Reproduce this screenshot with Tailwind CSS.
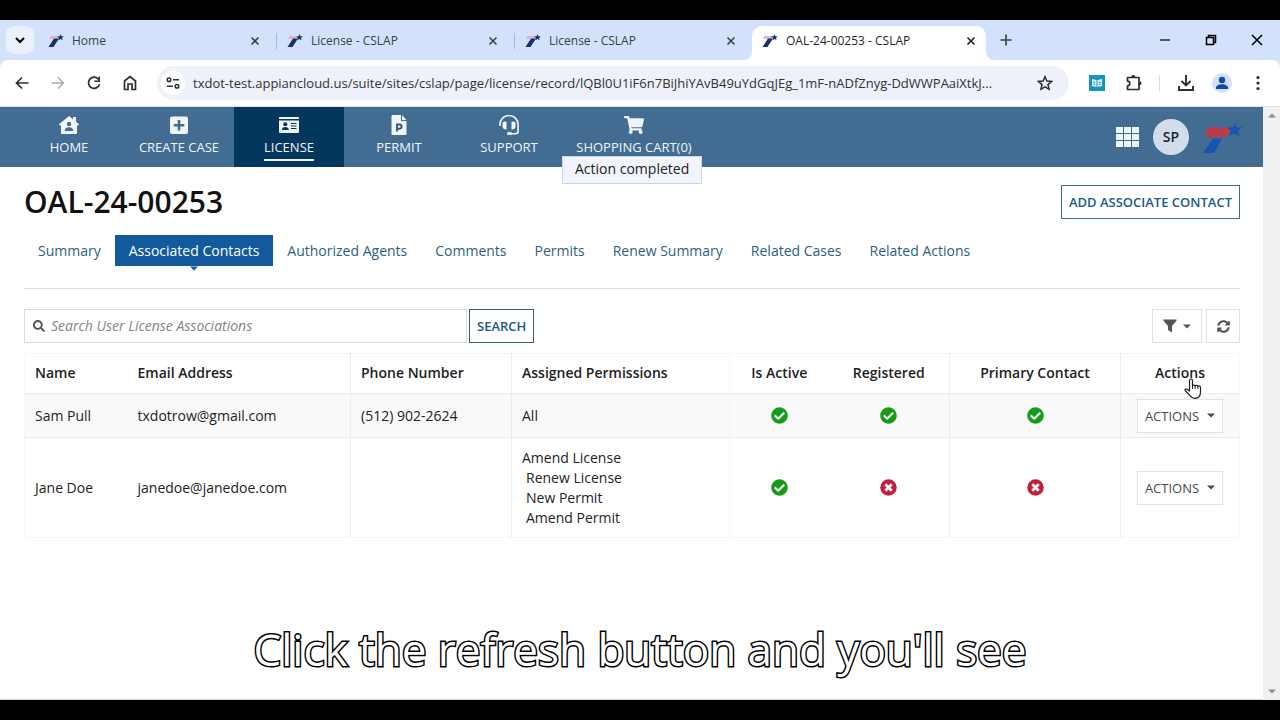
<!DOCTYPE html>
<html lang="en" class="h-full">
  <head>
    <meta charset="UTF-8" />
    <meta name="viewport" content="width=device-width, initial-scale=1.0" />
    <title>OAL-24-00253 - CSLAP</title>
    <script src="https://cdn.jsdelivr.net/npm/@tailwindcss/browser@4"></script>
  </head>
  <body class="relative flex h-screen flex-col overflow-hidden bg-black py-5 font-['Open_Sans','Noto_Sans',sans-serif] text-sm text-[#222]">
    <!-- Shared icons -->
    <svg class="hidden">
      <symbol id="favicon" viewBox="0 0 16 16">
        <path fill="#e3b3c4" d="M2.500 3h8L9.500 6H1z" />
        <path fill="#17306f" d="M6 5.500h5L5.500 14H0.500z" />
        <path fill="#17306f" d="M12.500 1l.9 2.200 2.400.2-1.800 1.500.6 2.400-2.100-1.300L10.300 7.300l.7-2.400-1.900-1.500 2.500-.1z" />
      </symbol>
      <symbol id="close" viewBox="0 0 10 10">
        <path fill="none" stroke="currentColor" stroke-width="1.600" d="M1.500 1.500l7 7M8.500 1.500l-7 7" />
      </symbol>
      <symbol id="check" viewBox="0 0 512 512">
        <path fill="currentColor" d="M504 256c0 136.967-111.033 248-248 248S8 392.967 8 256 119.033 8 256 8s248 111.033 248 248zM227.314 387.314l184-184c6.248-6.248 6.248-16.379 0-22.627l-22.627-22.627c-6.248-6.249-16.379-6.249-22.628 0L216 308.118l-70.059-70.059c-6.248-6.248-16.379-6.248-22.628 0l-22.627 22.627c-6.248 6.248-6.248 16.379 0 22.627l104 104c6.249 6.249 16.379 6.249 22.628.001z" />
      </symbol>
      <symbol id="times" viewBox="0 0 16 16">
        <circle cx="8" cy="8" r="7.750" fill="currentColor" />
        <path stroke="#fff" stroke-width="2.600" d="M5 5l6 6M11 5l-6 6" />
      </symbol>
      <symbol id="caret" viewBox="0 0 8 5">
        <path fill="currentColor" d="M0 0.500h8l-4 4z" />
      </symbol>
    </svg>

    <!-- Tab strip -->
    <header class="flex h-10 shrink-0 items-end bg-[#d3e2fb] pl-1.5 text-xs text-[#3c4043]">
      <button class="mb-1.5 flex size-7 items-center justify-center rounded-lg bg-[#eaf1fd]" aria-label="Search tabs">
        <svg class="h-2 w-2.5 text-black" viewBox="0 0 10 8"><path fill="none" stroke="currentColor" stroke-width="2" d="M1 2l4 4 4-4" /></svg>
      </button>
      <div class="ml-1 mr-0.5 flex h-[34px] w-[236px] items-center px-2.5 pb-1">
        <svg class="size-4"><use href="#favicon" /></svg>
        <a href="#" class="ml-2 grow">Home</a>
        <button class="mr-1" aria-label="Close tab"><svg class="size-2.5"><use href="#close" /></svg></button>
      </div>
      <div class="mr-0.5 flex h-[34px] w-[236px] items-center px-2.5 pb-1">
        <span class="-ml-2.5 mr-2.5 h-4 w-px bg-[#a3b8e0]"></span>
        <svg class="size-4"><use href="#favicon" /></svg>
        <a href="#" class="ml-2 grow">License - CSLAP</a>
        <button class="mr-1" aria-label="Close tab"><svg class="size-2.5"><use href="#close" /></svg></button>
      </div>
      <div class="mr-0.5 flex h-[34px] w-[236px] items-center px-2.5 pb-1">
        <span class="-ml-2.5 mr-2.5 h-4 w-px bg-[#a3b8e0]"></span>
        <svg class="size-4"><use href="#favicon" /></svg>
        <a href="#" class="ml-2 grow">License - CSLAP</a>
        <button class="mr-1" aria-label="Close tab"><svg class="size-2.5"><use href="#close" /></svg></button>
      </div>
      <div class="relative flex h-[34px] w-[234px] items-center rounded-t-[10px] bg-white px-2.5 pb-1 text-[#1f1f1f]">
        <svg class="absolute bottom-0 right-full size-2 text-white" viewBox="0 0 8 8"><path fill="currentColor" d="M8 0v8H0a8 8 0 0 0 8-8z" /></svg>
        <svg class="absolute bottom-0 left-full size-2 text-white" viewBox="0 0 8 8"><path fill="currentColor" d="M0 0v8h8a8 8 0 0 1-8-8z" /></svg>
        <svg class="size-4"><use href="#favicon" /></svg>
        <a href="#" class="ml-2 grow">OAL-24-00253 - CSLAP</a>
        <button aria-label="Close tab"><svg class="size-2.5"><use href="#close" /></svg></button>
      </div>
      <button class="mb-3.5 ml-3.5" aria-label="New tab">
        <svg class="size-3" viewBox="0 0 12 12"><path stroke="currentColor" stroke-width="1.600" d="M6 0.500v11M0.500 6h11" /></svg>
      </button>
      <div class="mb-3.5 ml-auto mr-[17px] flex items-center gap-[34px] text-black">
        <button aria-label="Minimize"><svg class="size-3" viewBox="0 0 12 12"><path stroke="currentColor" stroke-width="1.200" d="M1 6h10" /></svg></button>
        <button aria-label="Restore"><svg class="size-3" viewBox="0 0 12 12"><path fill="none" stroke="currentColor" stroke-width="1.500" d="M1.500 3.500h7v7h-7zM3.500 3.500V1.500h7v7h-2" /></svg></button>
        <button aria-label="Close window"><svg class="size-3" viewBox="0 0 12 12"><path stroke="currentColor" stroke-width="1.500" d="M1 1l10 10M11 1L1 11" /></svg></button>
      </div>
    </header>

    <!-- Toolbar -->
    <div class="shrink-0 bg-[#d3e2fb]">
      <div class="flex h-[47px] items-center rounded-t-lg border-b border-[#dfe3ea] bg-white pl-[15px] pr-5 text-[#2b2d30]">
        <button aria-label="Back"><svg class="size-3.5" viewBox="0 0 14 14"><path fill="none" stroke="currentColor" stroke-width="1.700" d="M13.500 7H1.500M7 1.500L1.500 7 7 12.500" /></svg></button>
        <button class="ml-[22px] text-[#a9abae]" aria-label="Forward"><svg class="size-3.5" viewBox="0 0 14 14"><path fill="none" stroke="currentColor" stroke-width="1.500" d="M0.500 7h12M7 1.500L12.500 7 7 12.500" /></svg></button>
        <button class="ml-[22px]" aria-label="Reload"><svg class="size-3.5" viewBox="0 0 14 14"><path fill="none" stroke="currentColor" stroke-width="1.700" d="M11.600 3.400A5.600 5.600 0 1 0 12.500 8.200" /><path fill="currentColor" d="M13 0.500v5.600H7.400V4.500h4V0.500z" /></svg></button>
        <button class="ml-[22px]" aria-label="Home page"><svg class="h-4 w-3.5" viewBox="0 0 14 16"><path fill="none" stroke="currentColor" stroke-width="1.700" d="M1.500 6L7 1.500 12.500 6v8.500H9V9H5v5.500H1.500z" /></svg></button>
        <div class="ml-5 flex h-[34px] min-w-0 grow items-center rounded-full bg-[#eef1fa] pl-1 pr-4">
          <button class="flex size-6 shrink-0 items-center justify-center rounded-full bg-white" aria-label="Site information">
            <svg class="h-3 w-3.5" viewBox="0 0 14 12"><g fill="none" stroke="currentColor" stroke-width="1.500"><circle cx="3" cy="2.700" r="1.800" /><path d="M7 2.700h6M1 9.300h6" /><circle cx="11" cy="9.300" r="1.800" /></g></svg>
          </button>
          <input aria-label="Address" class="ml-2 min-w-0 grow bg-transparent text-[13px] text-[#303236] outline-none" value="txdot-test.appiancloud.us/suite/sites/cslap/page/license/record/lQBl0U1iF6n7BiJhiYAvB49uYdGqJEg_1mF-nADfZnyg-DdWWPAaiXtkJ..." />
          <button class="ml-4" aria-label="Bookmark this tab"><svg class="size-4" viewBox="0 0 16 16"><path fill="none" stroke="currentColor" stroke-width="1.500" d="M8 1.700l1.900 4.400 4.700.4-3.600 3.100 1.100 4.700L8 11.800l-4.100 2.500L5 9.600 1.400 6.500l4.700-.4z" /></svg></button>
        </div>
        <button class="ml-5" aria-label="Reader"><svg class="size-4" viewBox="0 0 16 16"><path fill="#1a93bd" d="M0 0h16v16H0z" /><path fill="#dff1f8" d="M3 4l4.500 1v7L3 11zM13 4L8.500 5v7l4.500-1z" /><path stroke="#1a93bd" d="M4.200 7l2 .4M4.200 9l2 .4M9.800 7.400l2-.4M9.800 9.400l2-.4" /></svg></button>
        <button class="ml-5" aria-label="Extensions"><svg class="size-[18px]" viewBox="0 0 18 18"><path fill="none" stroke="currentColor" stroke-width="1.700" stroke-linejoin="round" d="M2.500 3.500h11.500v12H2.500v-3.700a2.300 2.300 0 0 0 0-4.600z" /><path fill="currentColor" d="M6.300 3a2 2 0 0 1 4 0zM14.500 7.300a2 2 0 0 1 0 4z" /></svg></button>
        <span class="ml-4 h-4 w-px bg-[#cfdcf2]"></span>
        <button class="ml-[18px]" aria-label="Downloads"><svg class="size-4" viewBox="0 0 16 16"><path fill="none" stroke="currentColor" stroke-width="1.900" d="M8 0v10M3.500 6L8 10.500 12.500 6M1 11v4h14v-4" /></svg></button>
        <button class="ml-[18px]" aria-label="Profile"><svg class="size-5" viewBox="0 0 20 20"><circle cx="10" cy="10" r="10" fill="#d3e2fb" /><circle cx="10" cy="7" r="3.200" fill="#1348b8" /><path fill="#1348b8" d="M4 16v-1.500c0-2 3-3.300 6-3.300s6 1.300 6 3.300V16z" /></svg></button>
        <button class="ml-6" aria-label="Menu"><svg class="h-4 w-1" viewBox="0 0 4 16"><g fill="currentColor"><circle cx="2" cy="2.500" r="1.600" /><circle cx="2" cy="8" r="1.600" /><circle cx="2" cy="13.500" r="1.600" /></g></svg></button>
      </div>
    </div>

    <div class="flex min-h-0 grow bg-white">
      <div class="min-w-0 grow border-b border-[#d5d5d5]">
        <!-- Site navigation -->
        <nav class="flex h-[60px] items-center bg-[#436c92] pl-3.5 pr-5 text-[13px] leading-5 text-[#f0f5fa]">
          <a href="#" class="flex h-full w-[110px] flex-col items-center pt-2">
            <svg class="size-5" viewBox="0 0 20 20"><path fill="currentColor" d="M10 1l4 3.200V2h3v4.700l3 2.500-1 1.500-1-.6V18a1 1 0 0 1-1 1H3a1 1 0 0 1-1-1v-7.900l-1 .6-1-1.500z" /><circle cx="10" cy="9" r="2.200" fill="#436c92" /><path fill="#436c92" d="M5.800 16c0-2.500 1.500-3.700 4.200-3.700s4.200 1.200 4.200 3.700z" /></svg>
            <span class="mt-0.5">HOME</span>
          </a>
          <a href="#" class="flex h-full w-[110px] flex-col items-center pt-2">
            <svg class="size-5" viewBox="0 0 20 20"><rect x="1" y="1.500" width="18" height="17.500" rx="2" fill="currentColor" /><path stroke="#436c92" stroke-width="2.600" d="M10 5v10.500M4.700 10.200h10.600" /></svg>
            <span class="mt-0.5">CREATE CASE</span>
          </a>
          <a href="#" class="flex h-full w-[110px] flex-col items-center bg-[#03375e] pt-2">
            <svg class="size-5" viewBox="0 0 20 20"><path fill="currentColor" d="M1 2h18a1 1 0 0 1 1 1v1H0V3a1 1 0 0 1 1-1zM0 5.500h20V17a1 1 0 0 1-1 1H1a1 1 0 0 1-1-1z" /><circle cx="6.300" cy="9.300" r="2" fill="#03375e" /><path fill="#03375e" d="M2.800 15c0-2 1.400-3 3.500-3s3.500 1 3.500 3z" /><path stroke="#03375e" stroke-width="1.100" d="M12 8.500h5.500M12 11h5.500M12 13.500h5.500" /></svg>
            <span class="mt-0.5 border-b-2 pb-0.5">LICENSE</span>
          </a>
          <a href="#" class="flex h-full w-[110px] flex-col items-center pt-2">
            <svg class="size-5" viewBox="0 0 20 20"><path fill="currentColor" d="M3 0h9v6h5.500v13a1 1 0 0 1-1 1H3.500a1 1 0 0 1-1-1V1zM13 0l4.500 5H13z" /><path fill="none" stroke="#35587a" stroke-width="1.900" d="M8 16.500V9.500h2.500a2.100 2.100 0 0 1 0 4.200H8" /></svg>
            <span class="mt-0.5">PERMIT</span>
          </a>
          <a href="#" class="flex h-full w-[110px] flex-col items-center pt-2">
            <svg class="size-5" viewBox="0 0 20 20"><path fill="none" stroke="currentColor" stroke-width="1.600" d="M0.900 11V9.500a9.100 9 0 0 1 18.200 0V16a2.700 2.700 0 0 1-2.700 2.700H11" /><path fill="currentColor" d="M3.500 9.500A2.500 2.500 0 0 1 7.500 7v7.500c-2.500 0-4-1-4-3zM12.500 7a2.500 2.500 0 0 1 4 2.500v2c0 2-1.500 3-4 3z" /><rect x="8" y="17" width="5" height="3" rx="1.500" fill="currentColor" /></svg>
            <span class="mt-0.5">SUPPORT</span>
          </a>
          <a href="#" class="flex h-full w-[140px] flex-col items-center pt-2">
            <svg class="size-5" viewBox="0 0 576 512"><path fill="currentColor" d="M528.12 301.319l47.273-208C578.806 78.301 567.391 64 551.99 64H159.208l-9.166-44.81C147.758 8.021 137.93 0 126.529 0H24C10.745 0 0 10.745 0 24v16c0 13.255 10.745 24 24 24h69.883l70.248 343.435C147.325 417.1 136 435.222 136 456c0 30.928 25.072 56 56 56s56-25.072 56-56c0-15.674-6.447-29.835-16.824-40h209.647C430.447 426.165 424 440.326 424 456c0 30.928 25.072 56 56 56s56-25.072 56-56c0-22.172-12.888-41.332-31.579-50.405l5.517-24.276c3.413-15.018-8.002-29.319-23.403-29.319H218.117l-6.545-32h293.145c11.206 0 20.92-7.754 23.403-18.681z" /></svg>
            <span class="mt-0.5">SHOPPING CART(0)</span>
          </a>
          <button class="ml-auto" aria-label="Sites"><svg class="h-5 w-[23px]" viewBox="0 0 23 20"><path fill="currentColor" d="M0 0h7v6H0zM8 0h7v6H8zM16 0h7v6h-7zM0 7h7v6H0zM8 7h7v6H8zM16 7h7v6h-7zM0 14h7v6H0zM8 14h7v6H8zM16 14h7v6h-7z" /></svg></button>
          <button class="ml-3.5 size-9 rounded-full bg-[#d3dcea] text-sm font-semibold text-[#222]">SP</button>
          <svg class="ml-3 h-[34px] w-[42px]" viewBox="0 0 42 34" role="img" aria-label="TxDOT">
            <path fill="#c8373f" d="M7 7.500h20c2 0 3 2 1.500 4L25 17H4z" />
            <path stroke="#8f5063" stroke-width="0.700" d="M6 10h22M5 12.500h22M4 15h22" />
            <path fill="#1456b0" d="M12 18.500h9L13 33H2z" />
            <path fill="#1456b0" d="M34 1.500l1.800 6 6-.6-5 4 2 5.600-5.300-3-6 2.500 2.500-5-3.500-3.500 6.200-.3z" />
          </svg>
        </nav>

        <main class="pl-6 pr-[23px] pt-4">
          <div class="flex items-center justify-between">
            <h1 class="text-[30px] leading-[38px] font-semibold text-[#111]">OAL-24-00253</h1>
            <button class="h-[34px] border border-[#3c6f84] px-[7px] text-[13px] font-semibold text-[#20588a]">ADD ASSOCIATE CONTACT</button>
          </div>

          <div class="mt-3.5 flex border-b border-[#d9d9d9] pb-[22px] leading-[19px] text-[#2a5f83]">
            <a href="#" class="px-3.5 py-1.5">Summary</a>
            <a href="#" class="relative bg-[#125a9c] px-3.5 py-1.5 text-white">Associated Contacts
              <svg class="absolute left-1/2 top-full h-[5px] w-2 -translate-x-1/2 text-[#125a9c]"><use href="#caret" /></svg>
            </a>
            <a href="#" class="px-3.5 py-1.5">Authorized Agents</a>
            <a href="#" class="px-3.5 py-1.5">Comments</a>
            <a href="#" class="px-3.5 py-1.5">Permits</a>
            <a href="#" class="px-3.5 py-1.5">Renew Summary</a>
            <a href="#" class="px-3.5 py-1.5">Related Cases</a>
            <a href="#" class="px-3.5 py-1.5">Related Actions</a>
          </div>

          <div class="mt-5 flex items-center">
            <label class="flex h-[34px] w-[443px] items-center border border-[#d9dcde] px-2 text-[#555]">
              <svg class="size-3 shrink-0" viewBox="0 0 512 512"><path fill="currentColor" d="M505 442.700L405.300 343c-4.500-4.500-10.600-7-17-7H372c27.600-35.300 44-79.700 44-128C416 93.100 322.900 0 208 0S0 93.100 0 208s93.100 208 208 208c48.300 0 92.700-16.400 128-44v16.300c0 6.400 2.500 12.500 7 17l99.700 99.700c9.400 9.400 24.600 9.400 33.900 0l28.300-28.300c9.400-9.400 9.400-24.600.1-34zM208 336c-70.700 0-128-57.200-128-128 0-70.700 57.200-128 128-128 70.700 0 128 57.200 128 128 0 70.700-57.200 128-128 128z" /></svg>
              <input type="text" aria-label="Search User License Associations" placeholder="Search User License Associations" class="ml-1.5 grow outline-none placeholder:text-[#858585] placeholder:italic" />
            </label>
            <button class="ml-0.5 h-[34px] border border-[#3a5f70] px-[7px] text-[13px] font-semibold text-[#20588a]">SEARCH</button>
            <button class="ml-auto flex h-[34px] w-[50px] items-center justify-center gap-1.5 border border-[#e2e2e2] text-[#555]" aria-label="Filter">
              <svg class="size-3.5" viewBox="0 0 14 14"><path fill="currentColor" d="M0.500 0.500h13v1.300L9 7v6.500l-4-2.500V7L0.500 1.800z" /></svg>
              <svg class="h-[5px] w-2"><use href="#caret" /></svg>
            </button>
            <button class="ml-1 flex size-[34px] items-center justify-center border border-[#e2e2e2] text-[#555]" aria-label="Refresh">
              <svg class="size-[13px]" viewBox="0 0 512 512"><path fill="currentColor" d="M370.720 133.280C339.458 104.008 298.888 87.962 255.848 88c-77.458.068-144.328 53.178-162.791 126.850-1.344 5.363-6.122 9.150-11.651 9.150H24.103c-7.498 0-13.194-6.807-11.807-14.176C33.933 94.924 134.813 8 256 8c66.448 0 126.791 26.136 171.315 68.685L463.030 40.970C478.149 25.851 504 36.559 504 57.941V192c0 13.255-10.745 24-24 24H345.941c-21.382 0-32.090-25.851-16.971-40.971l41.750-41.749zM32 296h134.059c21.382 0 32.090 25.851 16.971 40.971l-41.750 41.750c31.262 29.273 71.835 45.319 114.876 45.280 77.418-.070 144.315-53.144 162.787-126.849 1.344-5.363 6.122-9.150 11.651-9.150h57.304c7.498 0 13.194 6.807 11.807 14.176C478.067 417.076 377.187 504 256 504c-66.448 0-126.791-26.136-171.315-68.685L48.970 471.030C33.851 486.149 8 475.441 8 454.059V320c0-13.255 10.745-24 24-24z" /></svg>
            </button>
          </div>

          <table class="mt-2.5 w-full table-fixed border border-[#f6f6f6] leading-5">
            <thead>
              <tr class="h-10 border-b border-[#ebebeb] text-left [&>th]:px-2.5 [&>th]:pb-0.5 [&>th]:font-semibold">
                <th class="w-[103px]">Name</th>
                <th>Email Address</th>
                <th class="w-[161px] border-x border-[#ececec]">Phone Number</th>
                <th class="w-[218px]">Assigned Permissions</th>
                <th class="w-[99px] border-l border-[#f6f6f6] text-center">Is Active</th>
                <th class="w-[121px] text-center">Registered</th>
                <th class="w-[171px] border-x border-[#ececec] text-center">Primary Contact</th>
                <th class="w-[119px] text-center">Actions</th>
              </tr>
            </thead>
            <tbody class="[&_td]:px-2.5">
              <tr class="h-11 border-b border-[#ebebeb] bg-[#f9f9f9]">
                <td>Sam Pull</td>
                <td>txdotrow@gmail.com</td>
                <td class="border-x border-[#ececec]">(512) 902-2624</td>
                <td>All</td>
                <td class="border-l border-[#f3f3f3]"><svg class="mx-auto size-[17px] text-[#179b17]" role="img" aria-label="Yes"><use href="#check" /></svg></td>
                <td><svg class="mx-auto size-[17px] text-[#179b17]" role="img" aria-label="Yes"><use href="#check" /></svg></td>
                <td class="border-x border-[#ececec]"><svg class="mx-auto size-[17px] text-[#179b17]" role="img" aria-label="Yes"><use href="#check" /></svg></td>
                <td><button class="mx-auto flex h-[34px] items-center gap-2 border border-[#e2e2e2] bg-white px-[7px] text-[13px] text-[#4a4a4a]">ACTIONS <svg class="h-[5px] w-2"><use href="#caret" /></svg></button></td>
              </tr>
              <tr class="h-[100px]">
                <td>Jane Doe</td>
                <td>janedoe@janedoe.com</td>
                <td class="border-x border-[#ececec]"></td>
                <td>
                  <div>Amend License</div>
                  <div class="pl-1">Renew License</div>
                  <div class="pl-1">New Permit</div>
                  <div class="pl-1">Amend Permit</div>
                </td>
                <td class="border-l border-[#f6f6f6]"><svg class="mx-auto size-[17px] text-[#179b17]" role="img" aria-label="Yes"><use href="#check" /></svg></td>
                <td><svg class="mx-auto size-[17px] text-[#c41e3e]" role="img" aria-label="No"><use href="#times" /></svg></td>
                <td class="border-x border-[#ececec]"><svg class="mx-auto size-[17px] text-[#c41e3e]" role="img" aria-label="No"><use href="#times" /></svg></td>
                <td><button class="mx-auto flex h-[34px] items-center gap-2 border border-[#e2e2e2] bg-white px-[7px] text-[13px] text-[#4a4a4a]">ACTIONS <svg class="h-[5px] w-2"><use href="#caret" /></svg></button></td>
              </tr>
            </tbody>
          </table>
        </main>
      </div>

      <!-- Scrollbar -->
      <div class="flex w-[17px] shrink-0 flex-col items-center justify-between bg-[#f0f0f0] py-1.5 text-[#8b8b8b]">
        <svg class="h-[5px] w-2 rotate-180"><use href="#caret" /></svg>
        <svg class="h-[5px] w-2"><use href="#caret" /></svg>
      </div>
    </div>

    <!-- Toast -->
    <div role="status" class="absolute left-[562px] top-[156px] border border-[#ccd6e6] bg-[#f1f4fc] px-3 pb-1 pt-0.5 leading-5">Action completed</div>

    <!-- Pointer -->
    <svg class="absolute left-[1184px] top-[378px] h-[21px] w-[18px]" viewBox="0 0 18 21">
      <path fill="#fff" stroke="#222" stroke-width="1.200" stroke-linejoin="round" d="M5.500 13V2.500a1.500 1.500 0 0 1 3 0V8c0-1.300 2.700-1.300 2.700.2 0-1.300 2.700-1.200 2.700.4 0-1.200 2.600-1 2.600.8V14c0 4-2 6.300-5.500 6.300-3 0-4.300-1.300-5.500-3.300L1.200 12.500c-.7-1.300 1-2.300 2-1.300z" />
      <path stroke="#222" d="M8.500 8v3M11.200 8.500V11M13.900 9v2" />
    </svg>

    <!-- Caption -->
    <p class="absolute inset-x-0 bottom-[38px] text-center text-[44px] leading-[66px] text-white [-webkit-text-stroke:3px_black] [paint-order:stroke]">Click the refresh button and you'll see</p>
  </body>
</html>
